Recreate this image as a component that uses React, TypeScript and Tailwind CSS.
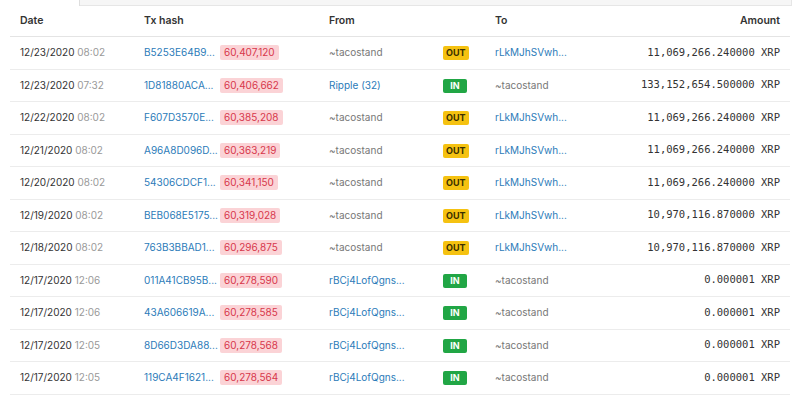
import React from "react";

type Row = {
  date: string;
  time: string;
  hash: string;
  block: string;
  from: string;
  fromLink: boolean;
  dir: "IN" | "OUT";
  to: string;
  toLink: boolean;
  amount: string;
};

const rows: Row[] = [
  { date: "12/23/2020", time: "08:02", hash: "B5253E64B9...", block: "60,407,120", from: "~tacostand", fromLink: false, dir: "OUT", to: "rLkMJhSVwh...", toLink: true, amount: "11,069,266.240000" },
  { date: "12/23/2020", time: "07:32", hash: "1D81880ACA...", block: "60,406,662", from: "Ripple (32)", fromLink: true, dir: "IN", to: "~tacostand", toLink: false, amount: "133,152,654.500000" },
  { date: "12/22/2020", time: "08:02", hash: "F607D3570E...", block: "60,385,208", from: "~tacostand", fromLink: false, dir: "OUT", to: "rLkMJhSVwh...", toLink: true, amount: "11,069,266.240000" },
  { date: "12/21/2020", time: "08:02", hash: "A96A8D096D...", block: "60,363,219", from: "~tacostand", fromLink: false, dir: "OUT", to: "rLkMJhSVwh...", toLink: true, amount: "11,069,266.240000" },
  { date: "12/20/2020", time: "08:02", hash: "54306CDCF1...", block: "60,341,150", from: "~tacostand", fromLink: false, dir: "OUT", to: "rLkMJhSVwh...", toLink: true, amount: "11,069,266.240000" },
  { date: "12/19/2020", time: "08:02", hash: "BEB068E5175...", block: "60,319,028", from: "~tacostand", fromLink: false, dir: "OUT", to: "rLkMJhSVwh...", toLink: true, amount: "10,970,116.870000" },
  { date: "12/18/2020", time: "08:02", hash: "763B3BBAD1...", block: "60,296,875", from: "~tacostand", fromLink: false, dir: "OUT", to: "rLkMJhSVwh...", toLink: true, amount: "10,970,116.870000" },
  { date: "12/17/2020", time: "12:06", hash: "011A41CB95B...", block: "60,278,590", from: "rBCj4LofQgns...", fromLink: true, dir: "IN", to: "~tacostand", toLink: false, amount: "0.000001" },
  { date: "12/17/2020", time: "12:06", hash: "43A606619A...", block: "60,278,585", from: "rBCj4LofQgns...", fromLink: true, dir: "IN", to: "~tacostand", toLink: false, amount: "0.000001" },
  { date: "12/17/2020", time: "12:05", hash: "8D66D3DA88...", block: "60,278,568", from: "rBCj4LofQgns...", fromLink: true, dir: "IN", to: "~tacostand", toLink: false, amount: "0.000001" },
  { date: "12/17/2020", time: "12:05", hash: "119CA4F1621...", block: "60,278,564", from: "rBCj4LofQgns...", fromLink: true, dir: "IN", to: "~tacostand", toLink: false, amount: "0.000001" },
];

const grid = "grid grid-cols-[124px_185px_114px_52px_1fr_auto] items-center";

export default function App() {
  return (
    <div
      className="w-[800px] h-[400px] overflow-hidden bg-white text-[10px] text-[#333]"
      style={{ fontFamily: "Inter, 'Liberation Sans', sans-serif" }}
    >
      <div className="mx-[8px] flex h-[6px]">
        <div className="w-[72px] bg-white border-r border-[#dedede]" />
        <div className="flex-1 bg-[#f6f6f6] border-b border-r border-[#e6e6e6]" />
      </div>
      <div className="mx-[10px]">
        <div className={`${grid} h-[31px] px-[10px] border-b border-[#e4e4e4] font-semibold text-[10.5px] text-[#333]`}>
          <div>Date</div>
          <div>Tx hash</div>
          <div>From</div>
          <div />
          <div>To</div>
          <div className="text-right">Amount</div>
        </div>
        {rows.map((r, i) => (
          <div key={i} className={`${grid} h-[32.5px] px-[10px] border-b border-[#ececec]`}>
            <div className="whitespace-nowrap">
              <span className="text-[#333]">{r.date}</span>{" "}
              <span className="text-[#999]">{r.time}</span>
            </div>
            <div className="flex items-center whitespace-nowrap">
              <span className="text-[#2b7bb9] w-[76px]">{r.hash}</span>
              <span className="bg-[#fbd3d6] text-[#d7374b] rounded-[2px] px-[4px] h-[15px] leading-[15px] text-[10px]">
                {r.block}
              </span>
            </div>
            <div className={r.fromLink ? "text-[#2b7bb9]" : "text-[#777]"}>{r.from}</div>
            <div>
              {r.dir === "OUT" ? (
                <span className="inline-block bg-[#f5c211] text-[#3a2f00] font-bold text-[9px] leading-[14px] h-[14px] px-[3px] rounded-[2px]">
                  OUT
                </span>
              ) : (
                <span className="inline-block bg-[#21a645] text-white font-bold text-[9px] leading-[14px] h-[14px] w-[24px] text-center rounded-[2px]">
                  IN
                </span>
              )}
            </div>
            <div className={r.toLink ? "text-[#2b7bb9]" : "text-[#777]"}>{r.to}</div>
            <div
              className="text-right text-[10.5px] text-[#333] whitespace-nowrap"
              style={{ fontFamily: "'DejaVu Sans Mono', monospace" }}
            >
              {r.amount} XRP
            </div>
          </div>
        ))}
      </div>
    </div>
  );
}
